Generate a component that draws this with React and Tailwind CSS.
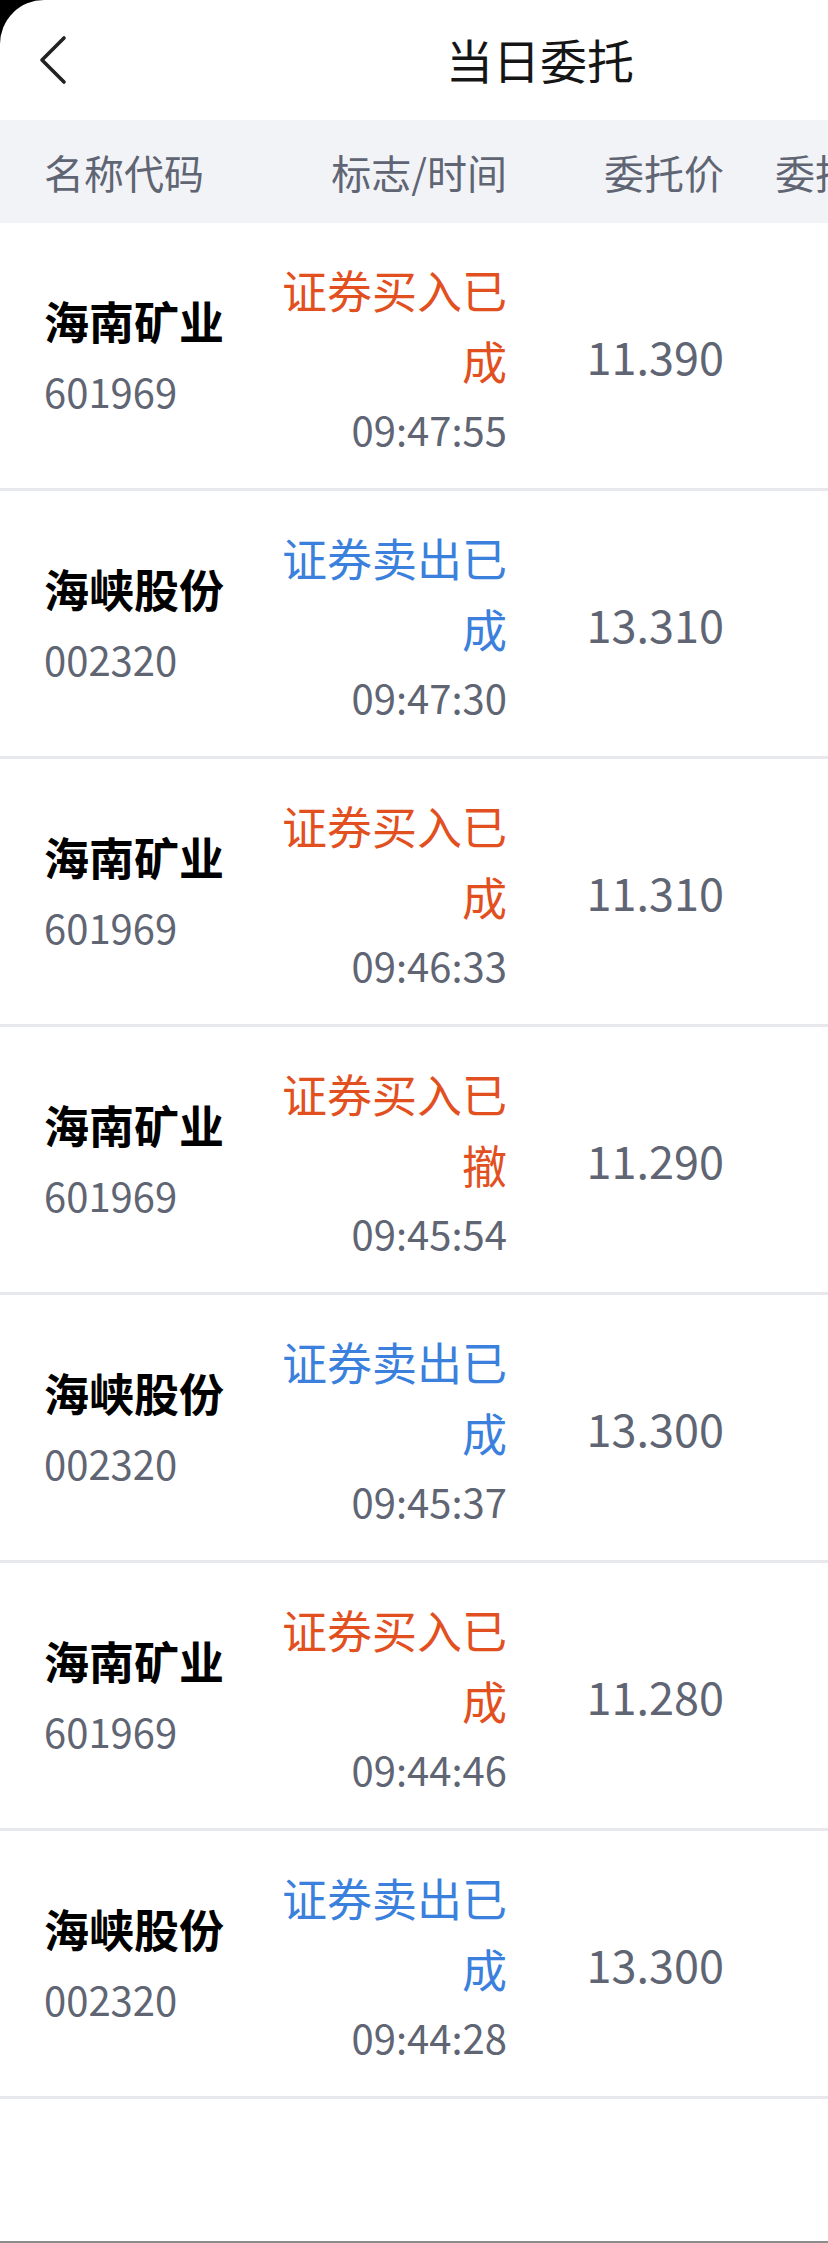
import React from "react";

const rows = [
  { name: "海南矿业", code: "601969", a: "证券买入已", b: "成", time: "09:47:55", price: "11.390", buy: true },
  { name: "海峡股份", code: "002320", a: "证券卖出已", b: "成", time: "09:47:30", price: "13.310", buy: false },
  { name: "海南矿业", code: "601969", a: "证券买入已", b: "成", time: "09:46:33", price: "11.310", buy: true },
  { name: "海南矿业", code: "601969", a: "证券买入已", b: "撤", time: "09:45:54", price: "11.290", buy: true },
  { name: "海峡股份", code: "002320", a: "证券卖出已", b: "成", time: "09:45:37", price: "13.300", buy: false },
  { name: "海南矿业", code: "601969", a: "证券买入已", b: "成", time: "09:44:46", price: "11.280", buy: true },
  { name: "海峡股份", code: "002320", a: "证券卖出已", b: "成", time: "09:44:28", price: "13.300", buy: false },
];

export default function App() {
  return (
    <div
      className="w-[828px] h-[2243px] bg-black overflow-hidden"
      style={{ fontFamily: '"Noto Sans CJK SC", "Noto Sans", sans-serif' }}
    >
      <div className="w-full h-full bg-white rounded-tl-[44px] flex flex-col border-b-[2px] border-[#8c8c8c]">
        {/* Nav */}
        <div className="h-[120px] flex items-center shrink-0">
          <svg className="ml-[36px] w-[34px] h-[50px] shrink-0" viewBox="0 0 34 50" fill="none">
            <polyline points="28,3 6,25 28,47" stroke="#222222" strokeWidth="3.6" strokeLinecap="round" strokeLinejoin="round" />
          </svg>
          <div className="ml-[376px] text-[47px] leading-none text-[#151515] -mt-[4px] whitespace-nowrap">当日委托</div>
        </div>
        {/* Header */}
        <div className="h-[103px] bg-[#f2f3f7] flex items-center shrink-0 whitespace-nowrap text-[40px] text-[#5f6573] overflow-hidden">
          <div className="w-[274px] shrink-0 pl-[44px]">名称代码</div>
          <div className="w-[233px] shrink-0 text-right">标志/时间</div>
          <div className="w-[217px] shrink-0 text-right">委托价</div>
          <div className="ml-[51px] shrink-0">委托数量</div>
        </div>
        {/* Rows */}
        {rows.map((r, i) => (
          <div key={i} className="h-[268px] border-b-[3px] border-[#e8e9ee] flex items-center shrink-0 whitespace-nowrap">
            <div className="w-[274px] shrink-0 pl-[44px] flex flex-col">
              <div className="text-[45px] leading-[70px] font-bold text-black">{r.name}</div>
              <div className="text-[40px] leading-[70px] text-[#5f6573]">{r.code}</div>
            </div>
            <div className="w-[233px] shrink-0 text-right pt-[4px]">
              <div className={`text-[45px] leading-[71px] ${r.buy ? "text-[#e2501f]" : "text-[#3a80dc]"}`}>
                {r.a}
                <br />
                {r.b}
              </div>
              <div className="text-[40px] leading-[66px] text-[#5f6573]">{r.time}</div>
            </div>
            <div className="w-[217px] shrink-0 text-right text-[45px] leading-[70px] text-[#5f6573]">{r.price}</div>
          </div>
        ))}
      </div>
    </div>
  );
}
